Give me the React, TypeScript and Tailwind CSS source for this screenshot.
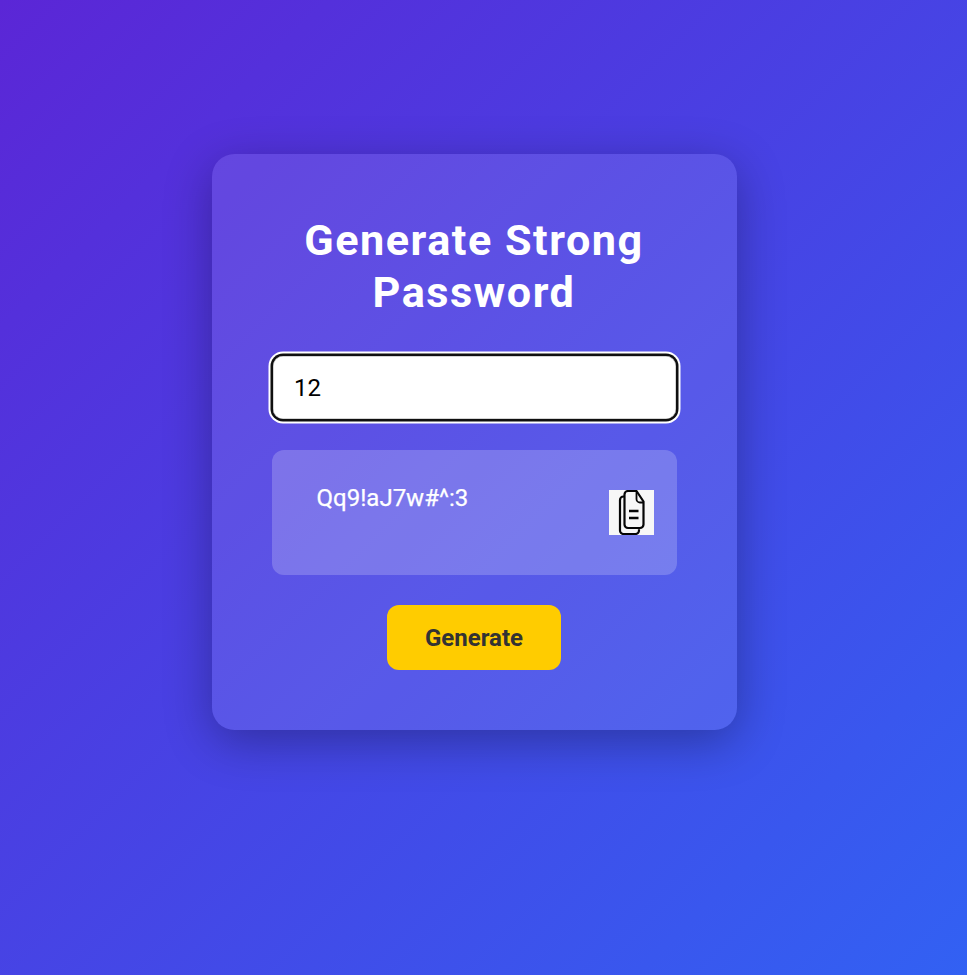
export default function App() {
  return (
    <main className="flex h-[975px] w-[967px] items-start justify-center overflow-hidden bg-[linear-gradient(135deg,#5b26d6,#3261f3)] pt-[154px] pr-[18px] font-['Roboto','Liberation_Sans',sans-serif]">
      <section className="flex h-[576px] w-[525px] flex-col items-center rounded-[22.5px] bg-white/10 px-[60px] pt-[61px] shadow-[0_12px_48px_rgba(0,0,0,0.3)]">
        <h1 className="mr-[1px] text-center text-[43.2px] leading-[52px] font-bold tracking-[1.5px] text-white">
          Generate Strong Password
        </h1>
        <input
          aria-label="Password length"
          defaultValue="12"
          className="mt-[37px] h-[63px] w-[403px] shrink-0 rounded-[10px] bg-white px-[21px] pt-[1px] text-[24px] text-black shadow-[inset_0_0_0_0.5px_#aaa,0_0_0_2.5px_#101010,0_0_0_4.5px_#fff] outline-none"
        />
        <div className="mt-[31px] flex h-[125px] w-[405px] shrink-0 items-center justify-between rounded-[12px] bg-white/20 pr-[23px] pl-[44.5px] text-white">
          <p className="mb-[29px] text-[24px] leading-[28px] [-webkit-text-stroke:0.25px_white]">Qq9!aJ7w#^:3</p>
          <button aria-label="Copy password" className="size-[45px] bg-[#f7f7f7]">
            <svg viewBox="0 0 45 45" className="size-full" fill="none" stroke="#050505" strokeWidth="2.2" strokeLinejoin="round">
              <path d="M15 6.500h-.5a3.500 3.500 0 0 0-3.500 3.500v30.500a3.500 3.500 0 0 0 3.500 3.500h12a3.500 3.500 0 0 0 3.500-3.500v-1.200" />
              <path d="M19 1H27.500l7 10.500v23a3.500 3.500 0 0 1-3.500 3.500H19a3.500 3.500 0 0 1-3.500-3.500v-30A3.500 3.500 0 0 1 19 1Z" />
              <path d="M27.500 1v8a3.500 3.500 0 0 0 3.500 3.500h3.500" strokeWidth="1.8" />
              <path d="M20 21h9.500M20 28h9.500" strokeWidth="2.500" />
            </svg>
          </button>
        </div>
        <button className="mt-[30px] mr-[1px] h-[65px] w-[174px] shrink-0 rounded-[12px] bg-[#ffcc00] text-[24px] font-bold text-[#333]">
          Generate
        </button>
      </section>
    </main>
  );
}
